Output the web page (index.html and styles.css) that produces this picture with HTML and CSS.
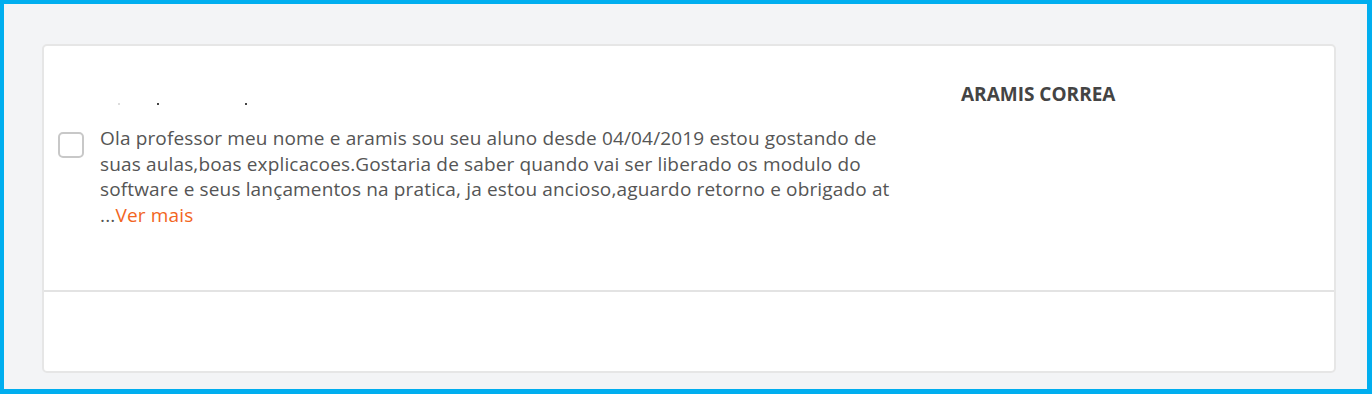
FILE: index.html
```html
<!DOCTYPE html>
<html lang="pt">
	<head>
		<title>Perguntas</title>
		<link rel="stylesheet" href="styles.css">
	</head>
	<body class="body">
		<div class="card">
			<div class="question">
				<div class="question-main">
					<div class="cut-line"><span class="dot dot-faint"></span><span class="dot"></span><span class="dot dot-far"></span></div>
					<div class="question-row">
						<span class="check"></span>
						<p class="question-text">Ola professor meu nome e aramis sou seu aluno desde 04/04/2019 estou gostando de suas aulas,boas explicacoes.Gostaria de saber quando vai ser liberado os modulo do software e seus lançamentos na pratica, ja estou ancioso,aguardo retorno e obrigado at ...<a href="#" class="more">Ver mais</a></p>
					</div>
				</div>
				<div class="author">ARAMIS CORREA</div>
			</div>
			<div class="answer"></div>
		</div>
	</body>
</html>
```

FILE: styles.css
```css
html, body {
	margin: 0;
	height: 100%;
}
.body {
	box-sizing: border-box;
	font-family: "Open Sans", sans-serif;
	background: #f3f4f6;
	border-style: solid;
	border-color: #00aeef;
	border-width: 4px 5px 5px 4px;
	padding: 40px 31px 16px 38px;
	display: flex;
}
.card {
	flex: 1;
	display: flex;
	flex-direction: column;
	background: #fff;
	border: 2px solid #e6e6e6;
	border-radius: 5px;
}
.question {
	height: 244px;
	display: flex;
	border-bottom: 2px solid #e3e3e3;
}
.question-main {
	width: 900px;
	padding-top: 56px;
}
.cut-line {
	height: 4px;
	position: relative;
}
.dot {
	position: absolute;
	left: 113px;
	top: 1px;
	width: 2px;
	height: 2px;
	background: #444;
}
.dot-faint {
	left: 74px;
	background: #ddd;
}
.dot-far {
	left: 201px;
}
.question-row {
	display: flex;
	align-items: flex-start;
	margin-top: 20px;
}
.check {
	flex: none;
	width: 22px;
	height: 22px;
	margin: 6px 16px 0 14px;
	border: 2px solid #c8c8c8;
	border-radius: 5px;
}
.question-text {
	margin: 0;
	width: 800px;
	font-size: 19px;
	letter-spacing: 0.15px;
	line-height: 25.6px;
	color: #555;
}
.more {
	color: #f26522;
	text-decoration: none;
}
.author {
	padding-top: 35px;
	padding-left: 17px;
	font-size: 19px;
	font-weight: 700;
	color: #444;
}
.answer {
	flex: 1;
}
```
